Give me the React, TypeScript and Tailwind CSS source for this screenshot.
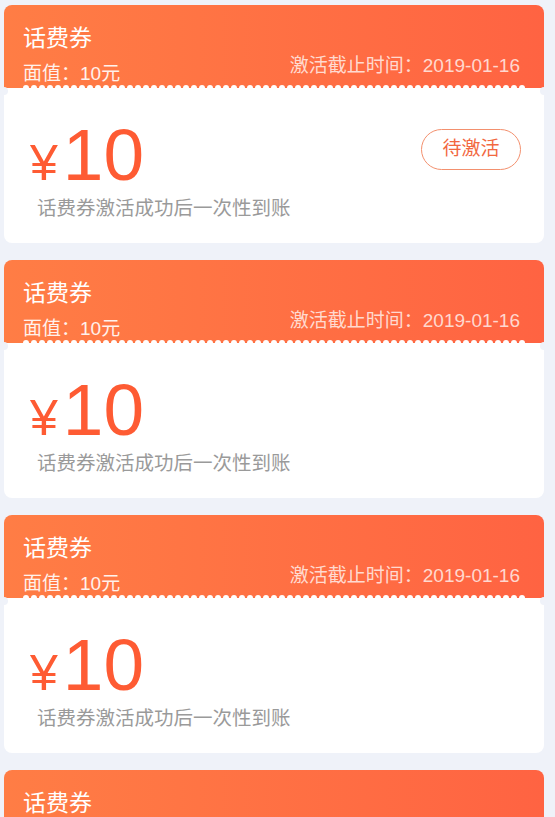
const FONT = {
  fontFamily: '"Liberation Sans", "Noto Sans CJK SC", sans-serif',
};

type CouponProps = {
  pending?: boolean;
};

const Scallops = () => (
  <svg
    className="absolute left-[18px] right-[18px] top-[-3px] h-[6px]"
    width="504"
    height="6"
    preserveAspectRatio="none"
  >
    <defs>
      <pattern id="dots" width="8" height="6" patternUnits="userSpaceOnUse">
        <circle cx="4" cy="3" r="3" fill="#ffffff" />
      </pattern>
    </defs>
    <rect width="100%" height="6" fill="url(#dots)" />
  </svg>
);

const Coupon = ({ pending }: CouponProps) => {
  return (
    <div className="relative w-[540px] shrink-0">
      <div className="flex h-[83px] flex-col rounded-t-[8px] bg-linear-to-r from-[#ff7d45] to-[#ff6342] pl-[19px] pr-[24px] pt-[17px] text-white">
        <div className="text-[23px] leading-[32px]">话费券</div>
        <div className="mt-auto flex items-end justify-between">
          <div className="mb-[10px] text-[19px] leading-[24px] text-white/90">面值：10元</div>
          <div className="mb-[18px] text-[19px] leading-[24px] text-white/75">
            激活截止时间：2019-01-16
          </div>
        </div>
      </div>
      <div className="relative h-[155px] rounded-b-[8px] bg-white pl-[26px] pt-[30px]">
        <Scallops />
        <div className="flex items-baseline leading-none text-[#fe5b33]">
          <span className="text-[50px]">¥</span>
          <span className="ml-[5px] text-[73px]">10</span>
        </div>
        <div className="ml-[7px] mt-[3px] text-[19.5px] leading-[28px] text-[#9a9a9a]">
          话费券激活成功后一次性到账
        </div>
        {pending && (
          <button className="absolute right-[23px] top-[41px] flex h-[41px] w-[100px] items-center justify-center rounded-full border border-[#f3906e] text-[19px] text-[#f2683f]">
            待激活
          </button>
        )}
      </div>
      <div className="absolute left-[-4px] top-[82px] h-[8px] w-[8px] rounded-full bg-[#eff2f9]" />
      <div className="absolute right-[-4px] top-[82px] h-[8px] w-[8px] rounded-full bg-[#eff2f9]" />
    </div>
  );
};

export default function App() {
  return (
    <div
      className="flex h-[817px] flex-col gap-[17px] overflow-hidden bg-[#eff2f9] pl-[4px] pt-[5px]"
      style={FONT}
    >
      <Coupon pending />
      <Coupon />
      <Coupon />
      <Coupon />
    </div>
  );
}
